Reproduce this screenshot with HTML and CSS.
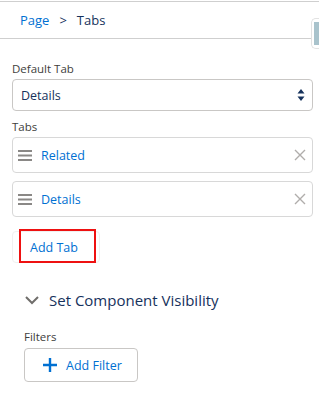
FILE: index.html
```html
<!DOCTYPE html>
<html>

<head>
  <title>Tabs</title>
  <link rel="stylesheet" href="styles.css">
</head>

<body>
  <div class="topbar">
    <a class="crumb" href="#">Page</a>
    <span class="sep">&gt;</span>
    <span class="current">Tabs</span>
  </div>
  <div class="scroll-handle"><span></span></div>

  <div class="panel">
    <label class="field-label" for="defaultTab">Default Tab</label>
    <div class="select-wrap">
      <select id="defaultTab">
        <option>Details</option>
        <option>Related</option>
      </select>
      <svg class="updown" width="8" height="12" viewBox="0 0 8 12">
        <path d="M4 0 L7.5 4.5 H0.5 Z M4 12 L7.5 7.5 H0.5 Z" fill="#16325c" />
      </svg>
    </div>

    <div class="field-label">Tabs</div>
    <div class="tab-row">
      <svg class="grip" width="14" height="11" viewBox="0 0 14 11">
        <rect y="0" width="14" height="2" fill="#8a8886" />
        <rect y="4.5" width="14" height="2" fill="#8a8886" />
        <rect y="9" width="14" height="2" fill="#8a8886" />
      </svg>
      <a class="tab-name" href="#">Related</a>
      <svg class="remove" width="12" height="12" viewBox="0 0 12 12">
        <path d="M1 1 L11 11 M11 1 L1 11" stroke="#b0adab" stroke-width="1.4" />
      </svg>
    </div>
    <div class="tab-row">
      <svg class="grip" width="14" height="11" viewBox="0 0 14 11">
        <rect y="0" width="14" height="2" fill="#8a8886" />
        <rect y="4.5" width="14" height="2" fill="#8a8886" />
        <rect y="9" width="14" height="2" fill="#8a8886" />
      </svg>
      <a class="tab-name" href="#">Details</a>
      <svg class="remove" width="12" height="12" viewBox="0 0 12 12">
        <path d="M1 1 L11 11 M11 1 L1 11" stroke="#b0adab" stroke-width="1.4" />
      </svg>
    </div>

    <div class="add-tab-wrap">
      <button class="add-tab" type="button">Add Tab</button>
      <span class="highlight"></span>
    </div>

    <div class="visibility">
      <h2 class="section-title">
        <svg class="chevron" width="14" height="9" viewBox="0 0 14 9">
          <path d="M1 1 L7 7 L13 1" stroke="#706e6b" stroke-width="2" fill="none" />
        </svg>
        Set Component Visibility
      </h2>
      <div class="field-label">Filters</div>
      <button class="add-filter" type="button">
        <svg width="16" height="16" viewBox="0 0 16 16">
          <path d="M8 1 V15 M1 8 H15" stroke="#0070d2" stroke-width="2.4" />
        </svg>
        Add Filter
      </button>
    </div>
  </div>
</body>

</html>
```

FILE: styles.css
```css
body {
  margin: 0;
  padding-top: 1px;
  font-family: "Open Sans", "Noto Sans", sans-serif;
  color: #080707;
  background: #fff;
}

a {
  color: #0070d2;
  text-decoration: none;
}

.topbar {
  height: 36px;
  border-top: 1px solid #cfcfcf;
  border-bottom: 1px solid #cfcfcf;
  display: flex;
  align-items: center;
  padding-left: 20px;
  font-size: 13px;
}

.sep {
  margin: 0 10px;
  color: #16325c;
}

.current {
  color: #16325c;
}

.scroll-handle {
  position: absolute;
  top: 18px;
  right: 0;
  width: 8px;
  height: 31px;
  border: 1px solid #e2e2e2;
  border-right: none;
  border-radius: 5px 0 0 5px;
  padding: 3px 0 3px 2px;
  box-sizing: border-box;
  background: #fff;
}

.scroll-handle span {
  display: block;
  height: 100%;
  background: #a9c3cc;
}

.panel {
  padding: 21px 6px 0 12px;
}

.field-label {
  display: block;
  font-size: 11.5px;
  line-height: 18px;
  color: #3e3e3c;
  margin-bottom: 1px;
}

.select-wrap {
  position: relative;
  margin-bottom: 7px;
}

select {
  width: 100%;
  height: 32px;
  border: 1px solid #c9c7c5;
  border-radius: 4px;
  padding: 0 8px;
  font-family: "Open Sans", "Noto Sans", sans-serif;
  font-size: 12.5px;
  color: #16325c;
  background: #fff;
  -webkit-appearance: none;
  appearance: none;
}

.updown {
  position: absolute;
  right: 8px;
  top: 10px;
}

.tab-row {
  height: 36px;
  box-sizing: border-box;
  border: 1px solid #d8d8d8;
  border-radius: 4px;
  display: flex;
  align-items: center;
  padding: 0 6px 0 5px;
  margin-bottom: 8px;
}

.grip {
  margin-right: 9px;
}

.tab-name {
  flex: 1;
  font-size: 12.5px;
}

.add-tab-wrap {
  position: relative;
  margin-top: 14px;
  height: 32px;
}

.add-tab {
  height: 32px;
  width: 88px;
  border: 1px solid #f0f0f0;
  border-radius: 4px;
  background: #fff;
  color: #0070d2;
  font-family: "Open Sans", "Noto Sans", sans-serif;
  font-size: 12.5px;
  text-align: left;
  padding: 0 0 0 17px;
}

.highlight {
  position: absolute;
  left: 7px;
  top: -2px;
  width: 77px;
  height: 34px;
  border: 2px solid #ee1111;
  box-sizing: border-box;
}

.visibility {
  padding-left: 12px;
}

.section-title {
  margin: 25px 0 16px;
  font-size: 15px;
  font-weight: normal;
  line-height: 24px;
  color: #16325c;
  display: flex;
  align-items: center;
}

.chevron {
  margin: 0 10px 0 1px;
}

.add-filter {
  display: flex;
  align-items: center;
  height: 34px;
  width: 114px;
  margin-top: 2px;
  border: 1px solid #c9c7c5;
  border-radius: 4px;
  background: #fff;
  color: #0070d2;
  font-family: "Open Sans", "Noto Sans", sans-serif;
  font-size: 12.5px;
  padding: 0 0 0 17px;
}

.add-filter svg {
  margin-right: 8px;
}
```
